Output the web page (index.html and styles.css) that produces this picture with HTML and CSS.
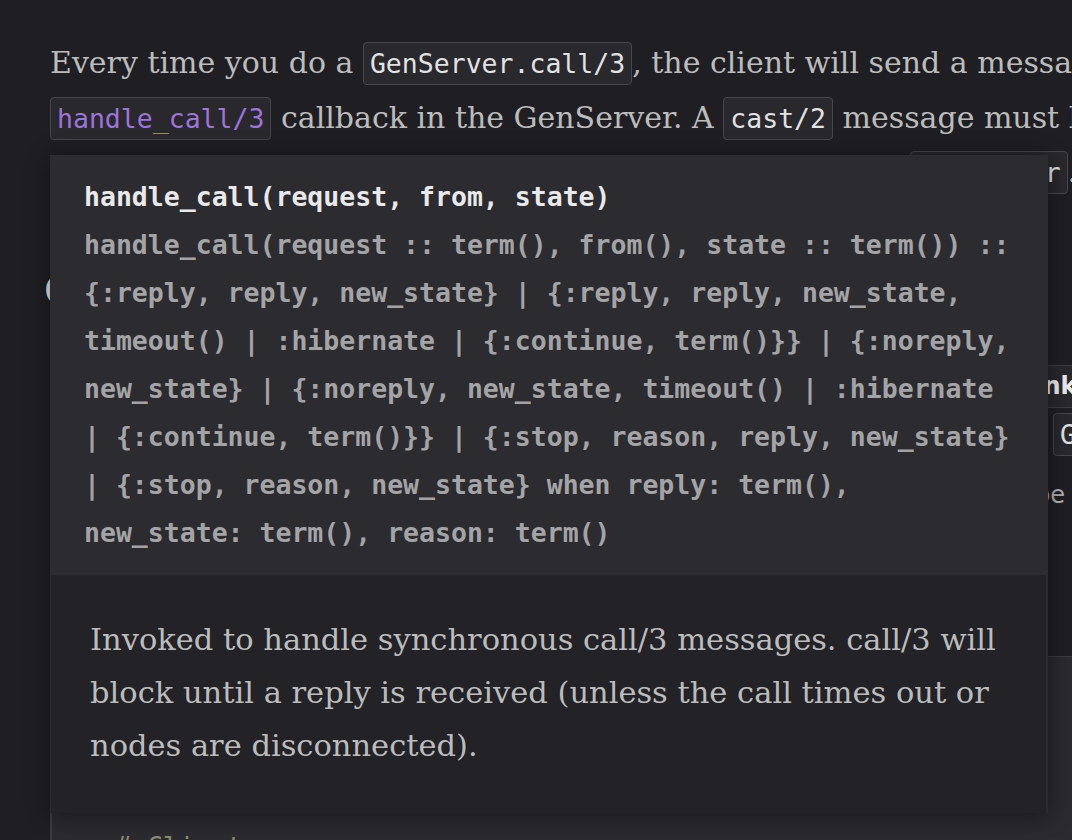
FILE: index.html
```html
<!DOCTYPE html>
<html lang="en">
<head>
<meta charset="utf-8">
<title>GenServer docs</title>
<link rel="stylesheet" href="styles.css">
</head>
<body>
<main class="doc">
  <p class="lead">Every time you do a <code class="pill">GenServer.call/3</code>, the client will send a message to the<br><code class="pill pill-link">handle_call/3</code> callback in the GenServer. A <code class="pill">cast/2</code> message must be sent to<br>handle_cast/2 instead, and both are dispatched through <code class="pill">GenServer</code>.</p>

  <h3 class="section-title">(Client / Server APIs)</h3>

  <div class="api-table">
    <div class="api-row api-head">
      <div class="api-main">Callback</div>
      <div class="api-side">Link</div>
    </div>
    <div class="api-row api-pill-row">
      <div class="api-main"></div>
      <div class="api-side api-pad"><code class="pill">GenServer</code></div>
    </div>
    <div class="api-row api-text-row">
      <div class="api-main"></div>
      <div class="api-side api-pad-text">be</div>
    </div>
  </div>

  <pre class="code-block">defmodule Stack do
use GenServer

# Client</pre>
</main>

<div class="tooltip">
  <div class="tip-sig">
    <div class="sig-head">handle_call(request, from, state)</div>
    <pre class="sig-spec">handle_call(request :: term(), from(), state :: term()) ::
{:reply, reply, new_state} | {:reply, reply, new_state,
timeout() | :hibernate | {:continue, term()}} | {:noreply,
new_state} | {:noreply, new_state, timeout() | :hibernate
| {:continue, term()}} | {:stop, reason, reply, new_state}
| {:stop, reason, new_state} when reply: term(),
new_state: term(), reason: term()</pre>
  </div>
  <div class="tip-doc">
    <p>Invoked to handle synchronous call/3 messages. call/3 will<br>block until a reply is received (unless the call times out or<br>nodes are disconnected).</p>
  </div>
</div>
</body>
</html>
```

FILE: styles.css
```css
html, body {
  margin: 0;
  padding: 0;
  background: #1f1f23;
  overflow: hidden;
  height: 840px;
}

.doc {
  width: 1500px;
  padding: 36px 0 0 50px;
  font-family: "DejaVu Serif", serif;
  color: #bcbcbc;
}

.lead {
  margin: 0;
  font-size: 30px;
  line-height: 53.5px;
  white-space: nowrap;
}

.pill {
  font-family: "DejaVu Sans Mono", monospace;
  font-size: 26.5px;
  color: #e2e2e2;
  background: #28282d;
  border: 1px solid #46464b;
  border-radius: 4px;
  padding: 5px 6px;
}

.pill-link {
  color: #9f72dc;
}

.section-title {
  margin: 64px 0 0 -7px;
  font-size: 34px;
  line-height: 48px;
  color: #e6e6e6;
  font-weight: bold;
}

.api-table {
  margin-top: 53px;
  font-family: "DejaVu Sans", sans-serif;
}

.api-row {
  display: flex;
  align-items: center;
}

.api-main {
  width: 970px;
  flex: none;
}

.api-head {
  height: 41px;
  background: #28282d;
  border-top: 1px solid #3d3d42;
  border-bottom: 1px solid #3d3d42;
  font-weight: bold;
  font-size: 24px;
  color: #ececec;
}

.api-pill-row {
  height: 53px;
}

.api-pad {
  padding-left: 33px;
}

.api-text-row {
  height: 68px;
  font-size: 24px;
  color: #b0b0b0;
}

.api-pad-text {
  padding-left: 15px;
}

.code-block {
  margin: 127px 0 0 0;
  height: 400px;
  background: #2a2a2f;
  border-top: 1px solid #3b3b40;
  border-left: 2px solid #3b3b40;
  padding: 22px 0 0 63px;
  font-family: "DejaVu Sans Mono", monospace;
  font-size: 26.5px;
  line-height: 48px;
  color: #8a8a74;
}

.tooltip {
  position: absolute;
  left: 50px;
  top: 155px;
  width: 998px;
  background: #2b2b30;
  box-shadow: 0 2px 22px rgba(0, 0, 0, 0.45);
}

.tip-sig {
  padding: 18px 34px;
  font-family: "DejaVu Sans Mono", monospace;
  font-size: 26.5px;
  line-height: 48px;
  font-weight: bold;
}

.sig-head {
  color: #e9e9e9;
  white-space: pre;
}

.sig-spec {
  margin: 0;
  font: inherit;
  color: #a4a4a6;
}

.tip-doc {
  margin: 0 2px 0 1px;
  background: #222227;
  height: 238px;
  box-sizing: border-box;
  padding: 38px 38px 0 39px;
}

.tip-doc p {
  margin: 0;
  font-family: "DejaVu Serif", serif;
  font-size: 30.5px;
  line-height: 53px;
  color: #bcbcbc;
  white-space: nowrap;
}
```
